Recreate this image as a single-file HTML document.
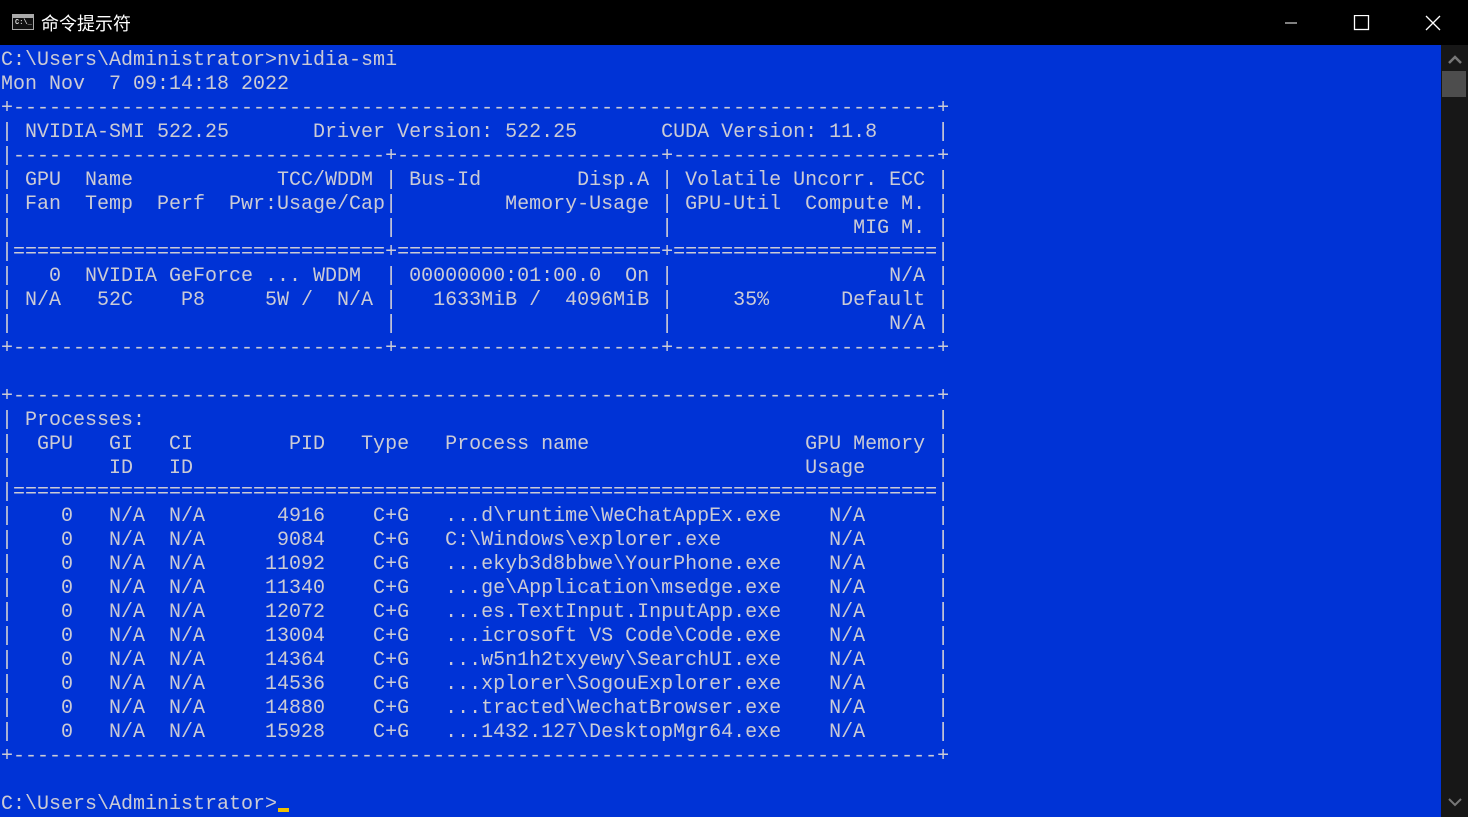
<!DOCTYPE html>
<html><head><meta charset="utf-8"><style>
html,body{margin:0;padding:0;width:1468px;height:817px;overflow:hidden;background:#000}
#title{position:absolute;left:0;top:0;width:1468px;height:45px;background:#000;color:#fff;font:18px "Liberation Sans","Noto Sans CJK SC",sans-serif}
#title .t{position:absolute;left:41px;top:10px}
#icon{position:absolute;left:12px;top:14px;width:22px;height:16px;border:1px solid #aaa;background:#111;box-sizing:border-box}
#icon:before{content:"";position:absolute;left:0;right:0;top:0;height:3px;background:#aaa}
#icon span{position:absolute;left:2px;top:4px;font:bold 7px "Liberation Mono",monospace;color:#ddd}
#con{position:absolute;left:0;top:45px;width:1441px;height:772px;background:#0033d6}
pre{margin:0;position:absolute;left:1px;top:4px;font:20px/24px "Liberation Mono",monospace;color:#cbcbd6;white-space:pre}
#sb{position:absolute;left:1441px;top:45px;width:27px;height:772px;background:#171717}
#thumb{position:absolute;left:1px;top:26px;width:24px;height:26px;background:#4d4d4d}
#cur{position:absolute;left:278px;top:808px;width:11px;height:4px;background:#f0c000}
</style></head><body>
<div id="title"><div id="icon"><span>C:\_</span></div><span class="t">命令提示符</span>
<svg style="position:absolute;left:1285px;top:15px" width="160" height="16"><line x1="0" y1="8" x2="12" y2="8" stroke="#fff"/><rect x="69.5" y="0.5" width="14" height="14" fill="none" stroke="#fff" stroke-width="1.3"/><path d="M141 1L155 15M155 1L141 15" stroke="#fff" stroke-width="1.3"/></svg></div>
<div id="con"><pre>C:\Users\Administrator>nvidia-smi
Mon Nov  7 09:14:18 2022
+-----------------------------------------------------------------------------+
| NVIDIA-SMI 522.25       Driver Version: 522.25       CUDA Version: 11.8     |
|-------------------------------+----------------------+----------------------+
| GPU  Name            TCC/WDDM | Bus-Id        Disp.A | Volatile Uncorr. ECC |
| Fan  Temp  Perf  Pwr:Usage/Cap|         Memory-Usage | GPU-Util  Compute M. |
|                               |                      |               MIG M. |
|===============================+======================+======================|
|   0  NVIDIA GeForce ... WDDM  | 00000000:01:00.0  On |                  N/A |
| N/A   52C    P8     5W /  N/A |   1633MiB /  4096MiB |     35%      Default |
|                               |                      |                  N/A |
+-------------------------------+----------------------+----------------------+

+-----------------------------------------------------------------------------+
| Processes:                                                                  |
|  GPU   GI   CI        PID   Type   Process name                  GPU Memory |
|        ID   ID                                                   Usage      |
|=============================================================================|
|    0   N/A  N/A      4916    C+G   ...d\runtime\WeChatAppEx.exe    N/A      |
|    0   N/A  N/A      9084    C+G   C:\Windows\explorer.exe         N/A      |
|    0   N/A  N/A     11092    C+G   ...ekyb3d8bbwe\YourPhone.exe    N/A      |
|    0   N/A  N/A     11340    C+G   ...ge\Application\msedge.exe    N/A      |
|    0   N/A  N/A     12072    C+G   ...es.TextInput.InputApp.exe    N/A      |
|    0   N/A  N/A     13004    C+G   ...icrosoft VS Code\Code.exe    N/A      |
|    0   N/A  N/A     14364    C+G   ...w5n1h2txyewy\SearchUI.exe    N/A      |
|    0   N/A  N/A     14536    C+G   ...xplorer\SogouExplorer.exe    N/A      |
|    0   N/A  N/A     14880    C+G   ...tracted\WechatBrowser.exe    N/A      |
|    0   N/A  N/A     15928    C+G   ...1432.127\DesktopMgr64.exe    N/A      |
+-----------------------------------------------------------------------------+

C:\Users\Administrator></pre></div>
<div id="sb"><svg style="position:absolute;left:7px;top:10px" width="14" height="10"><path d="M1 8L7 2L13 8" stroke="#777" stroke-width="2.5" fill="none"/></svg><div id="thumb"></div>
<svg style="position:absolute;left:7px;top:752px" width="14" height="10"><path d="M1 2L7 8L13 2" stroke="#777" stroke-width="2" fill="none"/></svg></div>
<div id="cur"></div>
</body></html>
